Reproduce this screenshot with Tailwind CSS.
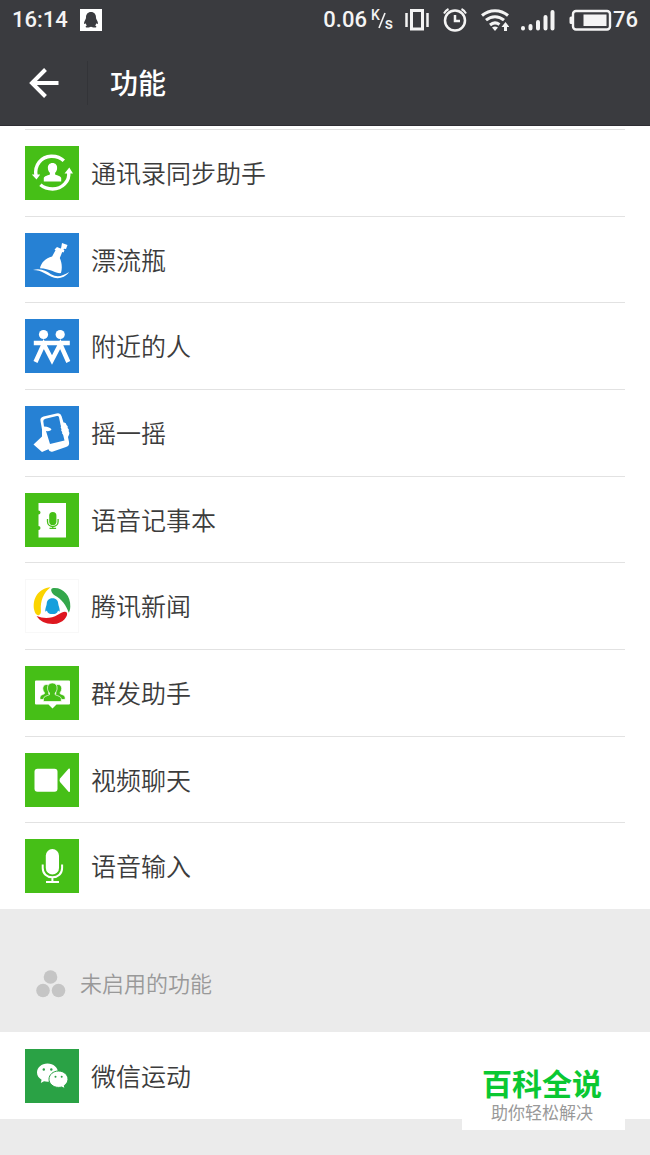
<!DOCTYPE html>
<html lang="zh-CN">
<head>
    <meta charset="UTF-8">
    <meta name="viewport" content="width=device-width, initial-scale=1.0">
    <title>功能</title>
    <script src="https://cdn.jsdelivr.net/npm/@tailwindcss/browser@4"></script>
</head>
<body class="min-h-screen flex flex-col bg-[#ebebeb] text-[#3c3c3c] font-['Noto_Sans_CJK_SC',sans-serif]">

    <!-- Header -->
    <header class="bg-[#3a3b3f] text-white">
        <!-- Status Bar -->
        <div class="flex items-center justify-between h-10 px-3 text-[22px] leading-10 text-[#f4f4f4] font-[Roboto,sans-serif]">
            <div class="flex items-center gap-3">
                <span class="font-medium">16:14</span>
                <svg class="w-[22px] h-[22px]" viewBox="0 0 22 22">
                    <rect width="22" height="22" fill="#fff"/>
                    <path fill="#3a3b3f" d="M11 3c3.300 0 5 2.400 5 5.500 0 1.300.5 1.800 1.200 3.200.7 1.500 1 3 .4 3.300-.5.200-1-.5-1.300-.8-.2 1-.6 1.700-1.200 2.300 1 .5 1.400.9 1.200 1.500-.3.800-3.800.8-5.300-.2-1.500 1-5 1-5.300.2-.2-.6.200-1 1.200-1.500-.6-.6-1-1.300-1.200-2.300-.3.300-.8 1-1.300.8-.6-.3-.3-1.800.4-3.300C5.500 10.300 6 9.800 6 8.500 6 5.400 7.700 3 11 3z"/>
                </svg>
            </div>
            <div class="flex items-center">
                <span class="font-medium">0.06</span>
                <span class="relative w-6 h-6 ml-1 text-sm leading-none font-medium">
                    <span class="absolute left-0 top-0">K</span>
                    <svg class="absolute inset-0 w-6 h-6" viewBox="0 0 24 24" fill="none" stroke="#f4f4f4" stroke-width="1.600"><path d="M14 5 8 20"/></svg>
                    <span class="absolute right-0.5 bottom-0 text-base leading-none">s</span>
                </span>
                <!-- Vibrate -->
                <svg class="w-6 h-6 ml-[10px]" viewBox="0 0 24 24" fill="none" stroke="#f4f4f4">
                    <rect x="6.500" y="2.500" width="11" height="18.500" stroke-width="3"/>
                    <path stroke-width="2.500" d="M1.500 5v14M22.500 5v14"/>
                </svg>
                <!-- Alarm -->
                <svg class="w-6 h-6 ml-[14px]" viewBox="0 0 24 24" fill="none" stroke="#f4f4f4" stroke-width="2.500">
                    <circle cx="12" cy="12.500" r="10"/>
                    <path d="M12 7v6h5"/>
                    <path stroke-width="2" d="M1 5.500C2 3.500 3.500 2 5.500 1M23 5.500C22 3.500 20.500 2 18.500 1"/>
                </svg>
                <!-- Wifi -->
                <svg class="w-7 h-6 ml-[14px]" viewBox="0 0 28 24" fill="none" stroke="#f4f4f4" stroke-width="3">
                    <path d="M1 7.500C8.500 1 19.500 1 27 7.500M5 12.200C10.500 7.500 17.500 7.500 23 12.200M9 17c3-2.600 6.500-2.600 9.500-.5"/>
                    <path fill="#f4f4f4" stroke="none" d="M11 19.500q3-2 6 0l-3 3.500zM24.500 14l4 5h-2.500v4h-3v-4h-2.500z"/>
                </svg>
                <!-- Signal -->
                <svg class="w-[34px] h-6 ml-3" viewBox="0 0 34 24" fill="none" stroke="#f4f4f4" stroke-width="4" stroke-linecap="round">
                    <path d="M2 20v.5M9.500 18v2.500M17 14v6.500M24.500 9v11.500M31.500 4v16.500"/>
                </svg>
                <!-- Battery -->
                <svg class="w-11 h-6 ml-[14px]" viewBox="0 0 44 24" fill="none">
                    <rect x="4" y="3" width="37" height="18.500" rx="3" stroke="#f4f4f4" stroke-width="2.400"/>
                    <path fill="#f4f4f4" d="M4 8.500H2q-1.500 0-1.500 1.500v4.500Q.5 16 2 16h2zM14.500 6.500h23v11.500h-23z"/>
                </svg>
                <span class="font-medium">76</span>
            </div>
        </div>
        <!-- Title Bar -->
        <div class="flex items-center h-[86px] border-b border-[#2e2d33]">
            <a href="#" aria-label="返回" class="flex items-center justify-end w-[88px] h-11 pr-7 border-r border-[#333438]">
                <svg class="w-[30px] h-[30px]" viewBox="0 0 30 30" fill="none" stroke="#fff" stroke-width="4">
                    <path d="M29.500 15H4M16.500 1.500 3 15 16.500 28.500"/>
                </svg>
            </a>
            <h1 class="ml-[22px] pb-0.5 text-[28px] leading-10 font-medium">功能</h1>
        </div>
    </header>

    <!-- Enabled Features -->
    <main class="flex-1 flex flex-col bg-white px-[25px] pt-[3px]">
        <ul class="flex-1 flex flex-col border-t border-[#e2e2e2] divide-y divide-[#e2e2e2]">
            <li class="flex-1 flex">
                <a href="#" class="flex-1 flex items-center gap-3 text-[25px] leading-9 font-[350]">
                    <svg class="w-[54px] h-[54px] bg-[#46bf17]" viewBox="0 0 54 54">
                        <g fill="none" stroke="#fff" stroke-width="3.400">
                            <path d="M11 30C9 19 16.500 10.500 26 10.200c5.500-.2 9.500 1.300 12.800 4.600"/>
                            <path d="M43.600 26c1.600 9-6.600 17-16 17-5 0-8.500-1-12.200-4.200"/>
                        </g>
                        <path fill="#fff" d="M6.800 28.500h8.400L11.500 33.500zM39.500 27.500h8.500L44.300 21.500z"/>
                        <path fill="#fff" d="M27.500 17c3 0 4.800 2.200 4.600 5.200-.1 2-.8 3.400-2 4.600v1.600c3 1.200 5.900 1.800 6.100 3.600v3.500H18.800V32c.2-1.800 3.100-2.400 6.100-3.600v-1.600c-1.200-1.200-1.900-2.600-2-4.600-.2-3 1.600-5.200 4.600-5.200z"/>
                    </svg>
                    <span class="pb-0.5">通讯录同步助手</span>
                </a>
            </li>
            <li class="flex-1 flex">
                <a href="#" class="flex-1 flex items-center gap-3 text-[25px] leading-9 font-[350]">
                    <svg class="w-[54px] h-[54px] bg-[#2681d4]" viewBox="0 0 54 54" fill="#fff">
                        <path d="m37 10 5.500 2-1.500 4-2-.3-1 2.300-2.800-1.200 1-2.400z"/>
                        <path d="m32 14 7.500 3.200-1 2.300-1.300-.4-2.400 6c1.800 4 2.800 9 1.200 15-5 .6-10.500-4.300-21-4.800 1-5.500 5.500-10 12.100-11.800l3.400-6.200-1-.8z"/>
                        <path d="M8 37c8-2 13 1 18 4.200 6 3.400 11 2.200 18.200-2.200-4 5.500-10 7-15 5.700C21.500 42.300 17 37 8 37z"/>
                    </svg>
                    <span class="pb-0.5">漂流瓶</span>
                </a>
            </li>
            <li class="flex-1 flex">
                <a href="#" class="flex-1 flex items-center gap-3 text-[25px] leading-9 font-[350]">
                    <svg class="w-[54px] h-[54px] bg-[#2681d4]" viewBox="0 0 54 54">
                        <circle cx="18.500" cy="15.500" r="4.600" fill="#fff"/>
                        <circle cx="35.200" cy="15.500" r="4.600" fill="#fff"/>
                        <path fill="none" stroke="#fff" stroke-width="4.400" d="M8.800 24h36M10.500 43l8.200-18 8.300 16 8.300-16 8 18"/>
                    </svg>
                    <span class="pb-0.5">附近的人</span>
                </a>
            </li>
            <li class="flex-1 flex">
                <a href="#" class="flex-1 flex items-center gap-3 text-[25px] leading-9 font-[350]">
                    <svg class="w-[54px] h-[54px] bg-[#2681d4]" viewBox="0 0 54 54">
                        <path fill="#fff" d="m18.500 10.500 13-3q4-1 5 2.500l2 6.500q2.800-.5 3 2.500 1.800 1 1.200 3 1.800 1.300 1 3.300 1.300 1.500.3 3.500L43 31l1 5q.8 4-3 5l-13 4.500q-3.600 1-4.600-2.200L17 46l-8.500-7.500 8.500-8v-7l-1.500-8.500q-.8-3.500 3-4.500z"/>
                        <path fill="#2681d4" d="m20.500 12.700 11.500-2.600q1.600-.3 2 1.200l1.500 7.200 1 3.800 1 4 2 8.200L25 38l-4-13q4 .6 5.500-1.300-1.500-3-7.500-3.200l-.7-5.300q-.3-2 2.200-2.500z"/>
                        <path fill="#fff" d="M38 16.500q-3 .8-1.800 3.200-1.400 1.500.4 3.200-1.200 1.800.7 3.200-.8 2 1.200 3l4-1z"/>
                    </svg>
                    <span class="pb-0.5">摇一摇</span>
                </a>
            </li>
            <li class="flex-1 flex">
                <a href="#" class="flex-1 flex items-center gap-3 text-[25px] leading-9 font-[350]">
                    <svg class="w-[54px] h-[54px] bg-[#46bf17]" viewBox="0 0 54 54">
                        <path fill="#fff" d="M13.500 10H41v34.500H13.500V37q2-.2 2-2t-2-2V21.500q2-.2 2-2t-2-2z"/>
                        <rect x="24.200" y="19" width="7.200" height="13" rx="3.600" fill="#46bf17"/>
                        <path fill="none" stroke="#46bf17" stroke-width="1.300" d="M22.500 26v2.500c0 3 2.300 5 5.300 5s5.300-2 5.300-5V26M27.800 33.500v2M24.500 35.300h6.600"/>
                    </svg>
                    <span class="pb-0.5">语音记事本</span>
                </a>
            </li>
            <li class="flex-1 flex">
                <a href="#" class="flex-1 flex items-center gap-3 text-[25px] leading-9 font-[350]">
                    <svg class="w-[54px] h-[54px] border border-[#f8f8f8]" viewBox="0 0 54 54">
                        <path fill="#fbd400" d="M25.500 7.500C13 8.500 6 19.500 8.600 31.500c.7 3.200 2.400 5.500 4.600 5 2.400-.5 2.400-3 2.200-6C14.900 22 18 13 25.500 7.500z"/>
                        <path fill="#34a74b" d="M27.500 8.500C38 7 46.500 16 46 27.500c-.1 3-.8 5-1.500 6.500-3-8-7-14-14.500-18-3-1.700-5.500-6.500-2.500-7.500z"/>
                        <path fill="#de1820" d="M42.500 34c1.500 3-4 11.500-14 11.800C20.500 46 14.500 43 11 37.500c8 3 15.500 2.500 22-1.500 3.500-2.200 8-4.500 9.500-2z"/>
                        <path fill="#159fdc" d="M27.500 19c4 0 6 2.800 6 6 .2 2 1.700 4.500 1.500 7.500-.8.600-1.400-.3-1.700-.7-.4 1.500-1.300 2.700-2.300 3-1.500.8-5.500.8-7 0-1-.3-1.900-1.500-2.300-3-.3.400-.9 1.300-1.700.7-.2-3 1.300-5.500 1.500-7.500 0-3.200 2-6 6-6z"/>
                    </svg>
                    <span class="pb-0.5">腾讯新闻</span>
                </a>
            </li>
            <li class="flex-1 flex">
                <a href="#" class="flex-1 flex items-center gap-3 text-[25px] leading-9 font-[350]">
                    <svg class="w-[54px] h-[54px] bg-[#46bf17]" viewBox="0 0 54 54">
                        <path fill="#fff" d="M11 14.500h33q1 0 1 1v22q0 1-1 1H31.500L27.500 42.500l-4-4H11q-1 0-1-1v-22q0-1 1-1z"/>
                        <g fill="#46bf17" stroke="#fff" stroke-width=".7">
                            <path id="member" d="M21.500 18.500c2.500 0 3.800 1.800 3.700 4.200-.1 1.700-.6 2.900-1.500 3.800v1.300c2.500 1 4.700 1.600 4.900 3.200v2.500H15V31c.2-1.600 2.100-2.200 4.400-3.200v-1.300c-.9-.9-1.500-2.100-1.600-3.800-.1-2.400 1.200-4.200 3.700-4.200z"/>
                            <use href="#member" x="11.500"/>
                            <path d="M27.300 17c3.200 0 5 2.200 4.800 5.200-.1 2.100-.8 3.600-2 4.800v1.700c3 1.200 6 2 6.200 3.900v2.900H18.400v-2.900c.2-1.900 3.100-2.700 6.100-3.900V27c-1.200-1.200-1.900-2.700-2-4.800-.2-3 1.600-5.200 4.800-5.200z"/>
                        </g>
                    </svg>
                    <span class="pb-0.5">群发助手</span>
                </a>
            </li>
            <li class="flex-1 flex">
                <a href="#" class="flex-1 flex items-center gap-3 text-[25px] leading-9 font-[350]">
                    <svg class="w-[54px] h-[54px] bg-[#46bf17]" viewBox="0 0 54 54" fill="#fff">
                        <rect x="9.500" y="15.700" width="23" height="23" rx="3"/>
                        <path d="M35 25.500 43.500 15.800q1.500-1 1.500.8v21.300q0 1.800-1.500.8L35 29q-1-1.700 0-3.500z"/>
                    </svg>
                    <span class="pb-0.5">视频聊天</span>
                </a>
            </li>
            <li class="flex-1 flex">
                <a href="#" class="flex-1 flex items-center gap-3 text-[25px] leading-9 font-[350]">
                    <svg class="w-[54px] h-[54px] bg-[#46bf17]" viewBox="0 0 54 54">
                        <rect x="20.800" y="10" width="13.200" height="25.500" rx="6.600" fill="#fff"/>
                        <path fill="none" stroke="#fff" stroke-width="2" d="M17.700 25.500V29c0 5.500 4 9.300 9.700 9.300S37.100 34.500 37.100 29v-3.500M27.400 38.300v4.500M21 43h13"/>
                    </svg>
                    <span class="pb-0.5">语音输入</span>
                </a>
            </li>
        </ul>
    </main>

    <!-- Disabled Features -->
    <section>
        <div class="flex items-center gap-[14px] h-[123px] pt-[27px] pl-9 text-[#999]">
            <svg class="w-[30px] h-7" viewBox="0 0 30 28" fill="#c5c5c5">
                <circle cx="14.500" cy="7" r="6.800"/>
                <circle cx="7" cy="20.500" r="6.800"/>
                <circle cx="22.500" cy="20.500" r="6.800"/>
            </svg>
            <h2 class="pb-1 text-[22px] leading-8 font-[350]">未启用的功能</h2>
        </div>
        <ul class="bg-white mb-9">
            <li>
                <a href="#" class="flex items-center gap-3 h-[87px] px-[25px] text-[25px] leading-9 font-[350]">
                    <svg class="w-[54px] h-[54px] bg-[#2aa245]" viewBox="0 0 54 54">
                        <path fill="#fff" d="M22.500 14.500c6 0 10.500 4 10.500 9s-4.500 9.300-10.500 9.300c-1.200 0-2.400-.2-3.500-.5L15.800 34l.8-3.200c-2.800-1.700-4.600-4.300-4.600-7.300 0-5 4.500-9 10.500-9z"/>
                        <path fill="#fff" stroke="#2aa245" stroke-width="1" d="M33.500 22c5.300 0 9.500 3.800 9.500 8.200 0 2.600-1.500 4.800-3.700 6.300l.7 3.200-3.300-1.700c-1 .3-2 .4-3.200.4-5.300 0-9.500-3.700-9.500-8.200s4.200-8.200 9.500-8.200z"/>
                        <g fill="#2aa245">
                            <circle cx="18.800" cy="20.500" r="1.200"/>
                            <circle cx="26.300" cy="20.500" r="1.200"/>
                            <circle cx="30.500" cy="27.800" r="1"/>
                            <circle cx="36.700" cy="27.800" r="1"/>
                        </g>
                    </svg>
                    <span class="pb-0.5">微信运动</span>
                </a>
            </li>
        </ul>
    </section>

    <!-- Site Badge -->
    <aside class="absolute right-[25px] bottom-[25px] pl-5 pr-[23px] pb-2 bg-white text-center">
        <p class="text-[30px] leading-10 font-bold text-[#0ac832]">百科全说</p>
        <p class="text-[17px] leading-5 text-[#999]">助你轻松解决</p>
    </aside>

</body>
</html>
